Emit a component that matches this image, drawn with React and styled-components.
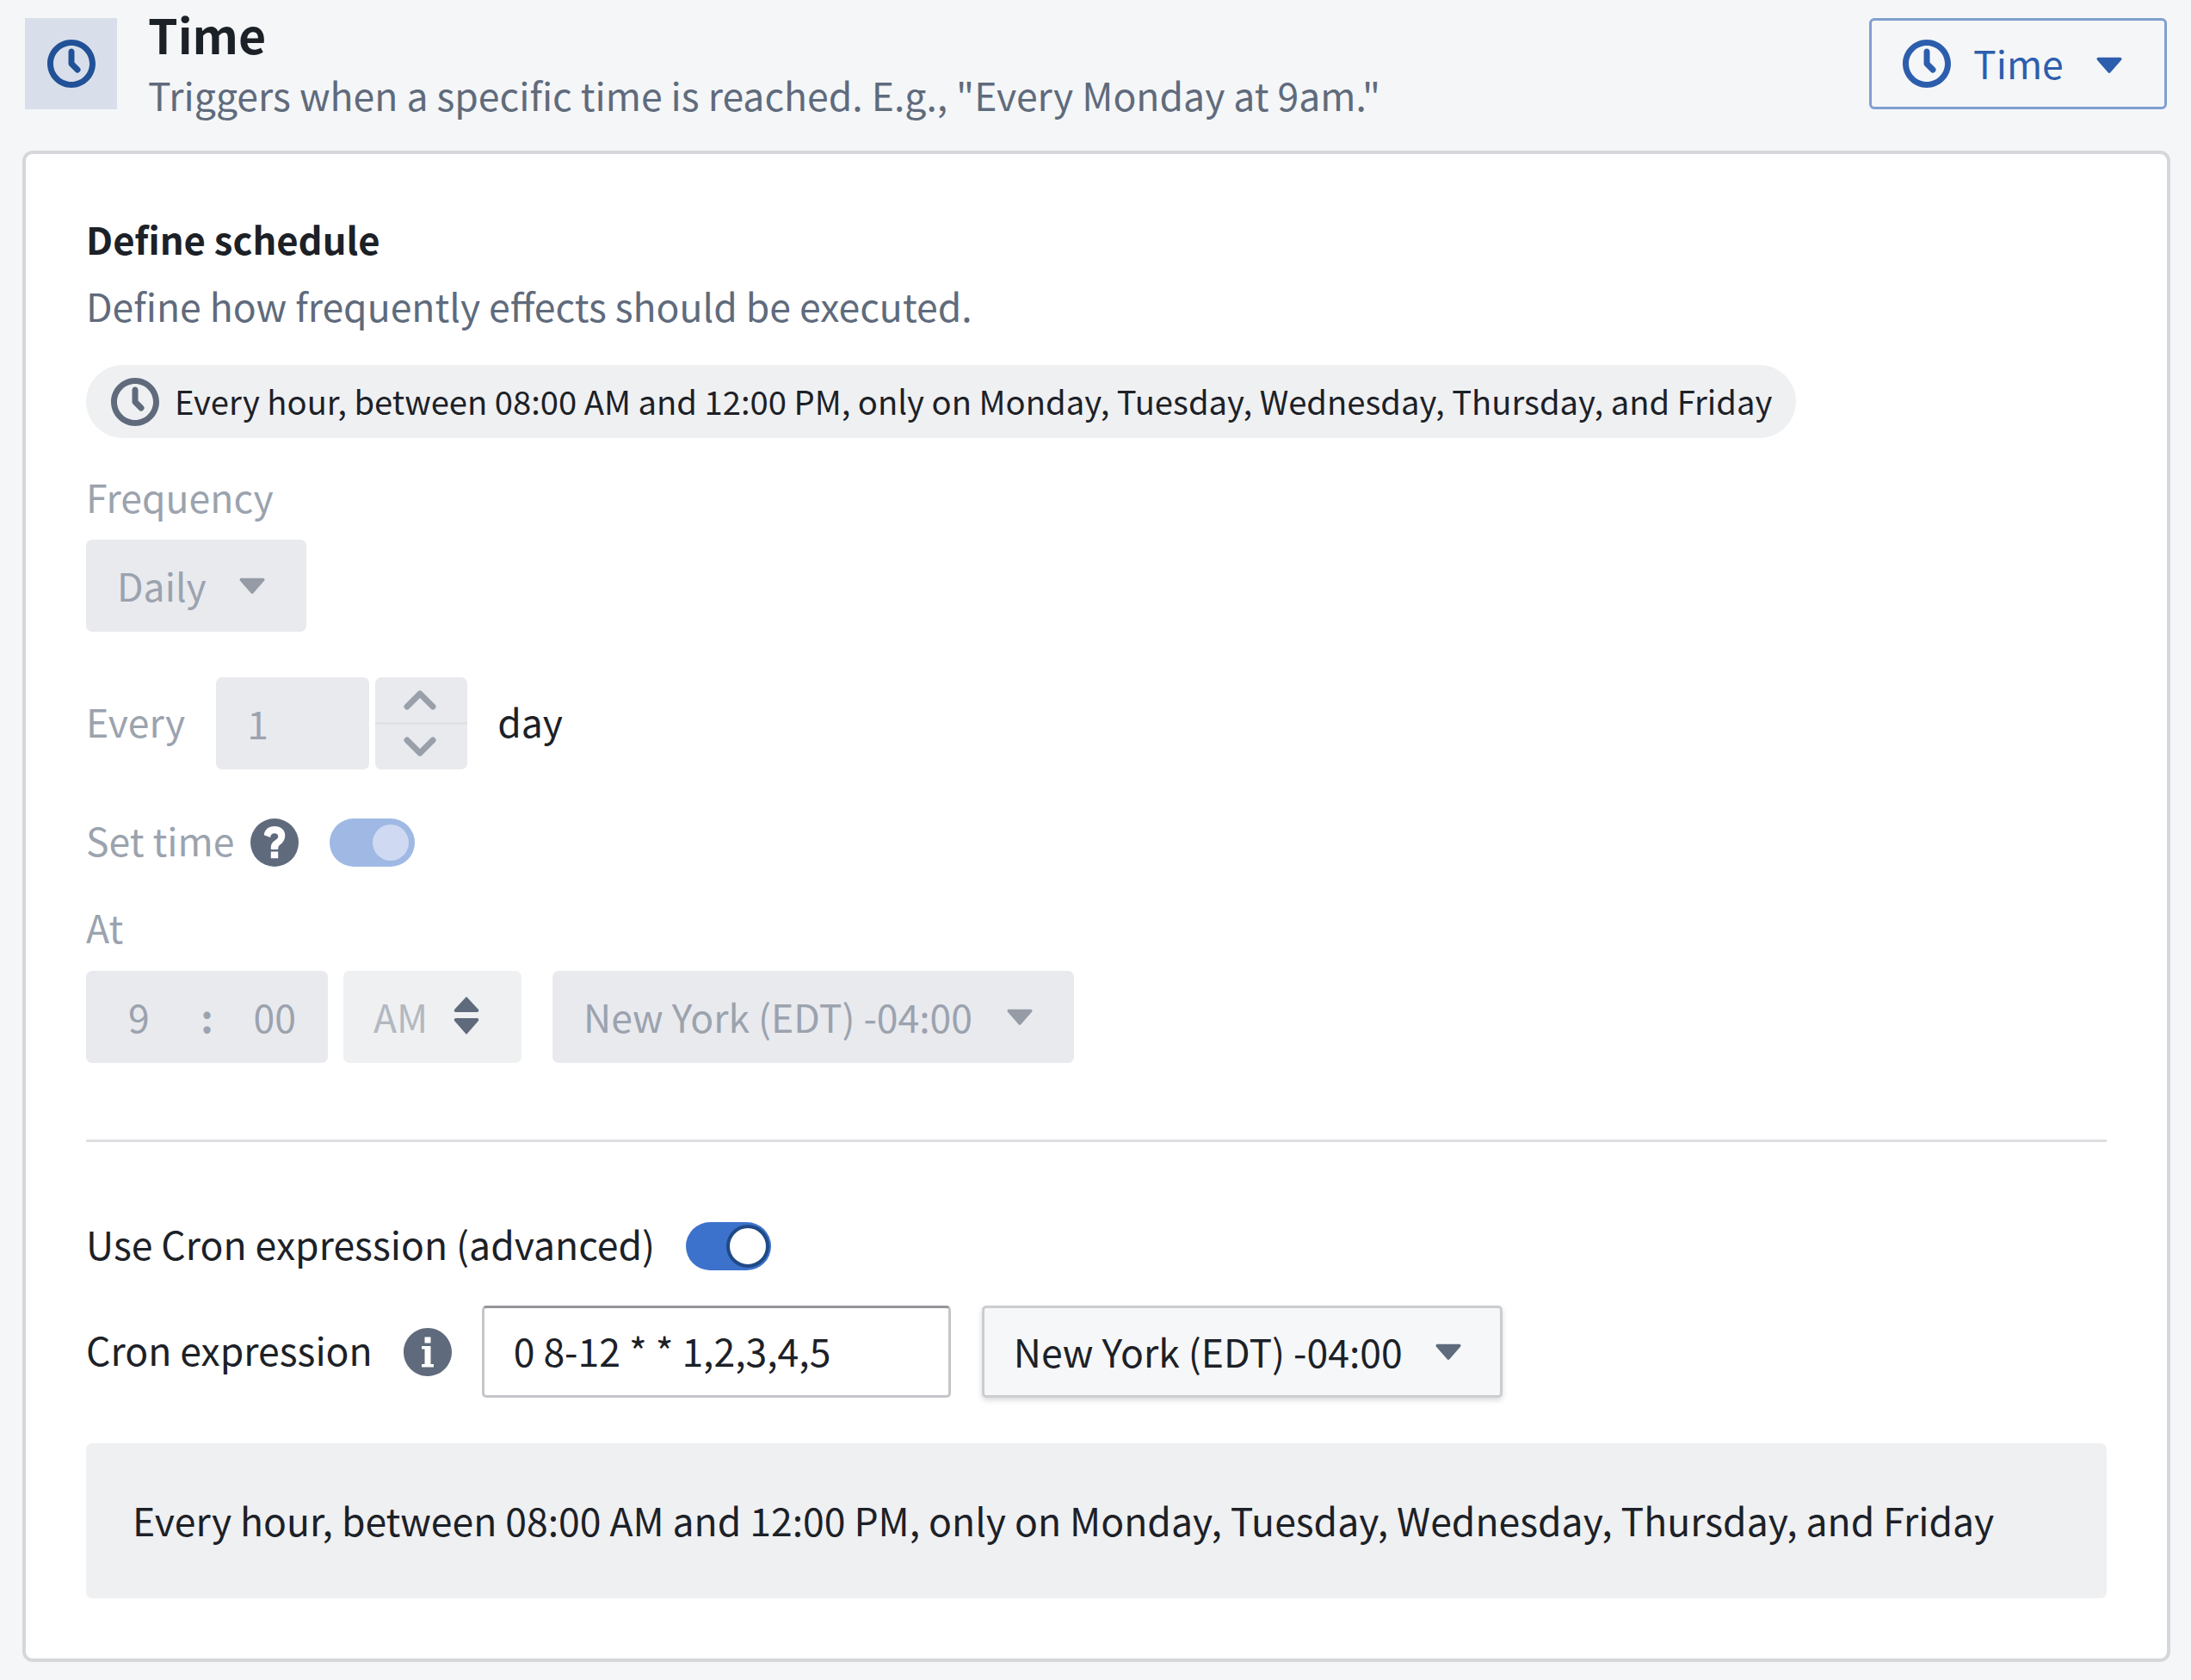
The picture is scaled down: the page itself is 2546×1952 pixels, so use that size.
import styled, { createGlobalStyle } from "styled-components"

const GlobalStyle = createGlobalStyle`
  html, body { margin: 0; padding: 0; background: #f5f6f8; }
  * { box-sizing: border-box; }
  body { font-family: "Noto Sans CJK SC", "Noto Sans", sans-serif; font-size: 44.5px; color: #1c2127; }
`

const Page = styled.div`
  width: 2546px;
  height: 1952px;
  padding: 21px 24px 0 26px;
  display: flex;
  flex-direction: column;
  gap: 48px;
  overflow: hidden;
`
const Header = styled.header`
  display: flex;
  align-items: flex-start;
  height: 106px;
  padding-right: 4px;
`
const HeaderIcon = styled.div`
  width: 107px;
  height: 106px;
  margin-left: 3px;
  background: #d9dfea;
  color: #215297;
  display: flex;
  align-items: center;
  justify-content: center;
`
const HeaderText = styled.div`
  flex: 1;
  margin-left: 36px;
  margin-top: -24px;
`
const Title = styled.div`
  font-size: 55.5px;
  line-height: 84px;
  font-weight: 700;
`
const Subtitle = styled.div`
  font-size: 44.5px;
  line-height: 62px;
  margin-top: -2px;
  color: #5f6b7c;
`
const TypeButton = styled.div`
  width: 346px;
  height: 106px;
  border: 3px solid #7f9fd0;
  border-radius: 6px;
  color: #2d5ead;
  display: flex;
  align-items: center;
  padding-left: 36px;
  font-size: 44.5px;
  line-height: 60px;
`
const TypeLabel = styled.span`
  margin-left: 26px;
  margin-bottom: 2px;
`
const TypeCaret = styled.span`
  margin-left: 24px;
  display: flex;
`
const Panel = styled.section`
  height: 1756px;
  background: #fff;
  border: 4px solid #d5d7da;
  border-radius: 12px;
  padding: 66px 70px 0;
  display: flex;
  flex-direction: column;
  align-items: flex-start;
`
const SectionTitle = styled.div`
  font-size: 43.6px;
  line-height: 64px;
  font-weight: 700;
`
const SectionHint = styled.div`
  font-size: 44.5px;
  line-height: 64px;
  margin-top: 14px;
  color: #5f6b7c;
`
const Pill = styled.div`
  height: 85px;
  width: 1987px;
  margin-top: 37px;
  border-radius: 43px;
  background: #eff0f2;
  color: #1c2127;
  font-size: 38.2px;
  padding-left: 29px;
  display: flex;
  align-items: center;
  gap: 18px;
  white-space: nowrap;
`
const PillText = styled.span`
  margin-bottom: 3px;
`
const PillIcon = styled.span`
  display: flex;
  color: #5f6b7c;
`
const Label = styled.div`
  font-size: 44.5px;
  line-height: 64px;
  color: ${(props) => (props.$muted ? "#9ba3ae" : "#1c2127")};
  white-space: nowrap;
  margin: -3px 0 3px ${(props) => props.$left || 0}px;
`
const FrequencyLabel = styled(Label)`
  margin-top: 36px;
`
const AtLabel = styled(Label)`
  margin-top: 34px;
`
const Field = styled.div`
  height: 107px;
  width: ${(props) => props.$width}px;
  margin-left: ${(props) => props.$left || 0}px;
  background: ${(props) => props.$bg || "#e9eaee"};
  border-radius: 7px;
  color: ${(props) => props.$color || "#9ba3ae"};
  font-size: 44.5px;
  display: flex;
  align-items: center;
  padding-left: ${(props) => props.$pad || 36}px;
  padding-bottom: 3px;
  white-space: nowrap;
`
const SelectField = styled(Field)`
  margin-top: 15px;
`
const Caret = styled.span`
  display: flex;
  margin-left: ${(props) => props.$left}px;
  color: #969ca6;
`
const Row = styled.div`
  display: flex;
  align-items: center;
  margin-top: ${(props) => props.$top}px;
`
const Stepper = styled.div`
  width: 107px;
  height: 107px;
  margin-left: 7px;
  background: #e9eaee;
  border-radius: 7px;
  display: flex;
  flex-direction: column;
  color: #9aa0aa;
`
const StepButton = styled.div`
  flex: 1;
  display: flex;
  align-items: center;
  justify-content: center;
  padding-right: 3px;
  & + & { border-top: 3px solid #dfe2e4; }
`
const TimeGroup = styled(Field)`
  display: grid;
  grid-template-columns: 1fr auto 1fr;
  align-items: center;
  padding: 0 37px 3px 49px;
`
const TimeColon = styled.span`
  margin-right: 12px;
  font-weight: 700;
`
const TimeMinutes = styled.span`
  justify-self: end;
`
const UpDown = styled.span`
  display: flex;
  margin-left: 30px;
  color: #5f6b7c;
`
const Divider = styled.hr`
  width: 100%;
  height: 3px;
  border: 0;
  margin: 89px 0 0;
  background: #dcdee1;
`
const Toggle = styled.div`
  width: 99px;
  height: 56px;
  margin-left: ${(props) => props.$left || 0}px;
  border-radius: 28px;
  background: ${(props) => (props.$on ? "#3c72cc" : "#9fb9e4")};
  position: relative;
`
const Knob = styled.span`
  position: absolute;
  top: ${(props) => (props.$on ? 3 : 7)}px;
  right: ${(props) => (props.$on ? 2 : 7)}px;
  width: ${(props) => (props.$on ? 50 : 42)}px;
  height: ${(props) => (props.$on ? 50 : 42)}px;
  border-radius: 50%;
  background: ${(props) => (props.$on ? "#fff" : "#cfdaf2")};
  border: ${(props) => (props.$on ? "4px solid #1f4a86" : "none")};
`
const HelpIcon = styled.span`
  display: flex;
  margin-left: ${(props) => props.$left}px;
  margin-right: ${(props) => props.$right}px;
  color: #5f6b7c;
`
const CronInput = styled.div`
  width: 545px;
  height: 107px;
  background: #fff;
  border: 3px solid #c4c6c9;
  border-top-color: #94969a;
  border-radius: 5px;
  padding: 0 0 4px 34px;
  font-size: 44.5px;
  display: flex;
  align-items: center;
  white-space: nowrap;
`
const ZoneSelect = styled.div`
  width: 605px;
  height: 107px;
  margin-left: 36px;
  background: #f6f7f9;
  border: 3px solid #cbcdd0;
  border-radius: 5px;
  box-shadow: 0 3px 6px rgba(28, 33, 39, 0.16);
  padding: 0 0 3px 34px;
  font-size: 44.5px;
  display: flex;
  align-items: center;
  white-space: nowrap;
  color: #1c2127;
`
const ZoneCaret = styled.span`
  display: flex;
  margin-left: 24px;
  color: #5f6b7c;
`
const Summary = styled.div`
  width: 100%;
  height: 180px;
  margin-top: 53px;
  background: #eff0f2;
  border-radius: 7px;
  padding: 0 0 4px 54px;
  font-size: 44.5px;
  display: flex;
  align-items: center;
  white-space: nowrap;
`

const ClockIcon = ({ size = 56 }) => (
  <svg width={size} height={size} viewBox="0 0 16 16" fill="currentColor">
    <path d="M8 0C3.58 0 0 3.58 0 8s3.58 8 8 8 8-3.58 8-8-3.58-8-8-8zm0 14c-3.31 0-6-2.69-6-6s2.69-6 6-6 6 2.69 6 6-2.69 6-6 6zm1-6.41V4c0-.55-.45-1-1-1s-1 .45-1 1v4c0 .28.11.53.29.71l2 2a1.003 1.003 0 001.42-1.42L9 7.59z" />
  </svg>
)

const CaretDown = ({ size = 58 }) => (
  <svg width={size} height={size} viewBox="0 0 16 16" fill="currentColor">
    <path d="M12 6.5c0-.28-.22-.5-.5-.5h-7a.495.495 0 00-.37.83l3.5 4c.09.1.22.17.37.17s.28-.07.37-.17l3.5-4c.08-.09.13-.2.13-.33z" />
  </svg>
)

const Chevron = ({ up }) => (
  <svg width="40" height="26" viewBox="0 0 40 26" fill="none" stroke="currentColor" strokeWidth="7" strokeLinecap="round" strokeLinejoin="round">
    <polyline points={up ? "5,21 20,6 35,21" : "5,5 20,20 35,5"} />
  </svg>
)

const DoubleCaret = () => (
  <svg width="30" height="44" viewBox="0 0 30 44" fill="currentColor">
    <path d="M15 0 L29 15 Q30 18 27 18 L3 18 Q0 18 1 15 Z" />
    <path d="M15 44 L29 28 Q30 25 27 25 L3 25 Q0 25 1 28 Z" />
  </svg>
)

const QuestionIcon = () => (
  <svg width="56" height="56" viewBox="0 0 16 16" fill="currentColor">
    <path fillRule="evenodd" d="M8 0a8 8 0 100 16A8 8 0 008 0z M9.2 13.2H6.8V11h2.4v2.2z M10.4 8.3c-.7.5-1.2.9-1.2 1.7v.3H6.8v-.6c0-1.400.9-2.100 1.600-2.600.5-.4.8-.7.8-1.200 0-.6-.5-1-1.200-1-.8 0-1.300.5-1.400 1.400L4.500 5.500C4.700 3.700 6 2.600 8 2.600c2.100 0 3.500 1.200 3.500 3 0 1.300-.5 2-1.100 2.700z" />
  </svg>
)

const InfoIcon = () => (
  <svg width="56" height="56" viewBox="0 0 16 16" fill="currentColor">
    <path fillRule="evenodd" d="M8 0C3.58 0 0 3.58 0 8s3.58 8 8 8 8-3.58 8-8-3.58-8-8-8zM7 3h2v2H7V3zm3 10H6v-1h1V7H6V6h3v6h1v1z" />
  </svg>
)

const SCHEDULE_TEXT = "Every hour, between 08:00 AM and 12:00 PM, only on Monday, Tuesday, Wednesday, Thursday, and Friday"

const App = () => {
  return (
    <Page>
      <GlobalStyle />
      <Header>
        <HeaderIcon>
          <ClockIcon />
        </HeaderIcon>
        <HeaderText>
          <Title>Time</Title>
          <Subtitle>Triggers when a specific time is reached. E.g., "Every Monday at 9am."</Subtitle>
        </HeaderText>
        <TypeButton>
          <ClockIcon />
          <TypeLabel>Time</TypeLabel>
          <TypeCaret>
            <CaretDown />
          </TypeCaret>
        </TypeButton>
      </Header>

      <Panel>
        <SectionTitle>Define schedule</SectionTitle>
        <SectionHint>Define how frequently effects should be executed.</SectionHint>
        <Pill>
          <PillIcon>
            <ClockIcon />
          </PillIcon>
          <PillText>{SCHEDULE_TEXT}</PillText>
        </Pill>

        <FrequencyLabel $muted>Frequency</FrequencyLabel>
        <SelectField $width={256}>
          Daily
          <Caret $left={24}>
            <CaretDown />
          </Caret>
        </SelectField>

        <Row $top={53}>
          <Label $muted>Every</Label>
          <Field $width={178} $left={36}>1</Field>
          <Stepper>
            <StepButton>
              <Chevron up />
            </StepButton>
            <StepButton>
              <Chevron />
            </StepButton>
          </Stepper>
          <Label $left={35}>day</Label>
        </Row>

        <Row $top={53}>
          <Label $muted>Set time</Label>
          <HelpIcon $left={19} $right={36}>
            <QuestionIcon />
          </HelpIcon>
          <Toggle>
            <Knob />
          </Toggle>
        </Row>

        <AtLabel $muted>At</AtLabel>
        <Row $top={16}>
          <TimeGroup $width={281}>
            <span>9</span>
            <TimeColon>:</TimeColon>
            <TimeMinutes>00</TimeMinutes>
          </TimeGroup>
          <Field $width={207} $bg="#eff0f2" $color="#b3b8c0" $pad={35} $left={18}>
            AM
            <UpDown>
              <DoubleCaret />
            </UpDown>
          </Field>
          <Field $width={606} $left={36}>
            New York (EDT) -04:00
            <Caret $left={26}>
              <CaretDown />
            </Caret>
          </Field>
        </Row>

        <Divider />

        <Row $top={89}>
          <Label>Use Cron expression (advanced)</Label>
          <Toggle $on $left={36}>
            <Knob $on />
          </Toggle>
        </Row>

        <Row $top={37}>
          <Label>Cron expression</Label>
          <HelpIcon $left={36} $right={35}>
            <InfoIcon />
          </HelpIcon>
          <CronInput>0 8-12 * * 1,2,3,4,5</CronInput>
          <ZoneSelect>
            New York (EDT) -04:00
            <ZoneCaret>
              <CaretDown />
            </ZoneCaret>
          </ZoneSelect>
        </Row>

        <Summary>{SCHEDULE_TEXT}</Summary>
      </Panel>
    </Page>
  )
}

export default App
